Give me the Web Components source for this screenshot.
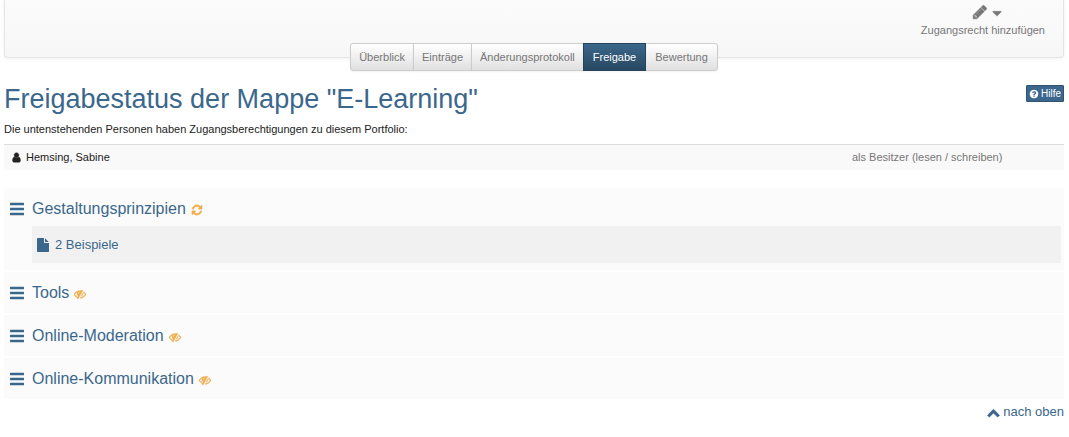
<!DOCTYPE html>
<html lang="de">
<head>
<meta charset="utf-8">
<title>Freigabe – E-Learning</title>
<style>
body { margin: 0; padding: 0 5px 16px 4px; background: #fff; color: #222; font: 11px/16px "Liberation Sans", Arial, sans-serif; }
</style>
</head>
<body>
<portfolio-page></portfolio-page>
<script>
const ICONS = {
  pencil: 'M491 1536l91-91-235-235-91 91v107h128v128h107zM1014 608q0-22-22-22-10 0-17 7l-542 542q-7 7-7 17 0 22 22 22 10 0 17-7l542-542q7-7 7-17zM960 416l416 416-832 832h-416v-416zM1643 512q0 53-37 90l-166 166-416-416 166-165q36-38 90-38 53 0 91 38l235 234q37 39 37 91z',
  caret: 'M320 640h1152q26 0 45 19t19 45-19 45l-576 576q-19 19-45 19t-45-19l-576-576q-19-19-19-45t19-45 45-19z',
  help: 'M1024 1376v-192q0-14-9-23t-23-9h-192q-14 0-23 9t-9 23v192q0 14 9 23t23 9h192q14 0 23-9t9-23zM1280 704q0-88-55.500-163t-138.500-116-170-41q-243 0-371 213-15 24 8 42l132 100q7 6 19 6 16 0 25-12 53-68 86-92 34-24 86-24 48 0 85.500 26t37.500 59q0 38-20 61t-68 45q-63 28-115.500 86.500t-52.500 125.500v36q0 14 9 23t23 9h192q14 0 23-9t9-23q0-19 21.500-49.500t54.500-49.500q32-18 49-28.500t46-35 44.500-48 28-60.500 12.500-81zM1664 896q0 209-103 385.500t-279.500 279.500-385.500 103-385.500-103-279.500-279.500-103-385.500 103-385.500 279.500-279.500 385.500-103 385.500 103 279.500 279.500 103 385.500z',
  user: 'M1536 1399q0 109-62.500 187t-150.500 78h-854q-88 0-150.500-78t-62.500-187q0-85 8.500-160.500t31.500-152 58.500-131 94-89 134.500-34.500q131 128 313 128t313-128q76 0 134.500 34.500t94 89 58.500 131 31.500 152 8.500 160.500zM1280 512q0 159-112.500 271.500t-271.500 112.500-271.500-112.500-112.500-271.500 112.500-271.500 271.500-112.500 271.500 112.500 112.500 271.500z',
  bars: 'M64 100h1664q64 0 64 64v192q0 64-64 64H64q-64 0-64-64V164q0-64 64-64zM64 736h1664q64 0 64 64v192q0 64-64 64H64q-64 0-64-64V800q0-64 64-64zM64 1372h1664q64 0 64 64v192q0 64-64 64H64q-64 0-64-64v-192q0-64 64-64z',
  refresh: 'M1639 1056q0 5-1 7-64 268-268 434.500t-478 166.500q-146 0-282.500-55t-243.500-157l-129 129q-19 19-45 19t-45-19-19-45v-448q0-26 19-45t45-19h448q26 0 45 19t19 45-19 45l-137 137q71 66 161 102t187 36q134 0 250-65t186-179q11-17 53-117 8-23 30-23h192q13 0 22.500 9.500t9.500 22.500zM1664 256v448q0 26-19 45t-45 19h-448q-26 0-45-19t-19-45 19-45l138-138q-148-137-349-137-134 0-250 65t-186 179q-11 17-53 117-8 23-30 23h-199q-13 0-22.500-9.500t-9.500-22.500v-7q65-268 270-434.500t480-166.500q146 0 284 55.500t245 156.500l130-129q19-19 45-19t45 19 19 45z',
  hidden: 'M555 1335l78-141q-87-63-136-159t-49-203q0-121 61-225-229 117-381 353 167 258 427 375zm389-759q0-20-14-34t-34-14q-125 0-214.500 89.500t-89.500 214.500q0 20 14 34t34 14 34-14 14-34q0-86 61-147t147-61q20 0 34-14t14-34zm363-191q0 7-1 9-105 188-315 566t-316 567l-49 89q-10 16-28 16-12 0-134-70-16-10-16-28 0-12 44-87-143-65-263.500-173t-208.500-245q-20-31-20-69t20-69q153-235 380-371t496-136q89 0 180 17l54-97q10-16 28-16 5 0 18 6t31 15.500 33 18.500 31.500 18.500 19.500 11.500q16 10 16 27zm37 447q0 139-79 253.500t-209 164.500l280-502q8 45 8 84zm448 128q0 35-20 69-39 64-109 145-150 172-347.500 267t-419.500 95l74-132q212-18 392.500-137t301.500-307q-115-179-282-294l63-112q95 64 182.500 153t144.500 184q20 34 20 69z',
  file: 'M1152 512v-472q22 14 36 28l408 408q14 14 28 36h-472zm-128 32q0 40 28 68t68 28h544v1056q0 40-28 68t-68 28h-1344q-40 0-68-28t-28-68v-1600q0-40 28-68t68-28h800v544z',
  up: 'M1683 1331l-166 165q-19 19-45 19t-45-19l-531-531-531 531q-19 19-45 19t-45-19l-166-165q-19-19-19-45.500t19-45.500l742-741q19-19 45-19t45 19l742 741q19 19 19 45.500t-19 45.500z'
};

function define(name, html, setup) {
  const template = document.createElement('template');
  template.innerHTML = html;
  customElements.define(name, class extends HTMLElement {
    connectedCallback() {
      if (this.shadowRoot) return;
      this.attachShadow({ mode: 'open' }).append(template.content.cloneNode(true));
      if (setup) setup(this, this.shadowRoot);
    }
  });
}

define('fa-icon', `
<style>
:host { display: inline-block; flex: none; width: var(--size, 12px); height: var(--size, 12px); }
svg { display: block; width: 100%; height: 100%; fill: currentColor; stroke: currentColor; stroke-width: var(--weight, 0); }
</style>
<svg viewBox="0 0 1792 1792" aria-hidden="true"><path/></svg>`,
(host, root) => root.querySelector('path').setAttribute('d', ICONS[host.getAttribute('name')]));

define('tool-bar', `
<style>
:host { display: flex; justify-content: flex-end; box-sizing: border-box; min-height: 58px; padding: 4px 14px 0; border: 1px solid #e5e5e5; border-top: 0; border-radius: 0 0 4px 4px; background: linear-gradient(#fbfbfb, #f7f7f7); box-shadow: 0 1px 4px #0000000d; }
</style>
<slot></slot>`);

define('tool-button', `
<style>
:host { display: block; }
button { display: flex; flex-direction: column; align-items: center; gap: 2px; margin: 0; padding: 0 4px; border: 0; background: none; color: #777; font: inherit; cursor: pointer; }
.icons { display: flex; align-items: center; gap: 3px; height: 16px; padding-left: 10px; }
.icons fa-icon { --size: 16px; --weight: 60; }
.icons .caret { --size: 12px; margin-top: 2px; }
</style>
<button type="button"><span class="icons"><fa-icon name="pencil"></fa-icon><fa-icon class="caret" name="caret"></fa-icon></span><span><slot></slot></span></button>`);

define('segment-tabs', `
<style>
:host { display: flex; justify-content: center; position: relative; margin-top: -15px; }
nav { display: flex; }
::slotted(segment-tab:not(:first-child)) { margin-left: -1px; }
::slotted(segment-tab:first-child) { --radius: 3px 0 0 3px; }
::slotted(segment-tab:last-child) { --radius: 0 3px 3px 0; --side: 9px; }
</style>
<nav aria-label="Mappe"><slot></slot></nav>`);

define('segment-tab', `
<style>
:host { display: block; }
a { display: block; padding: 5px var(--side, 8px); border: 1px solid #ccc; border-radius: var(--radius, 0); background: linear-gradient(#fff, #e0e0e0); color: #777; text-decoration: none; box-shadow: 0 1px 2px #0000000d; }
:host([active]) { position: relative; --side: 9px; }
:host([active]) a { border-color: #24445e; background: linear-gradient(#3b678c, #28475f); color: #fff; }
</style>
<a href="#"><slot></slot></a>`,
(host, root) => { if (host.hasAttribute('active')) root.querySelector('a').setAttribute('aria-current', 'page'); });

define('page-heading', `
<style>
:host { display: flex; justify-content: space-between; align-items: flex-start; margin-top: 14px; }
h1 { margin: 0; color: #3b678c; font-size: 27px; line-height: 28px; font-weight: 400; }
</style>
<h1><slot></slot></h1><slot name="action"></slot>`);

define('help-button', `
<style>
:host { display: block; }
button { display: flex; align-items: center; gap: 2px; margin: 0; padding: 0 2px; border: 1px solid #2f5370; border-radius: 1px; background: #3b678c; color: #fff; font: inherit; font-size: 10px; line-height: 15px; cursor: pointer; }
fa-icon { --size: 10px; }
</style>
<button type="button"><fa-icon name="help"></fa-icon><slot></slot></button>`);

define('access-table', `
<style>
:host { display: block; margin-top: 7px; }
table { width: 100%; border-collapse: collapse; table-layout: fixed; }
td { padding: 4px 7px 5px; border-top: 1px solid #ddd; background: #f9f9f9; text-align: left; }
.role { width: 20%; padding-left: 1px; padding-right: 0; color: #777; }
.name { display: flex; align-items: center; gap: 4px; }
fa-icon { --size: 11px; --weight: 80; }
</style>
<table aria-label="Zugangsberechtigungen"><tbody><tr>
<td><span class="name"><fa-icon name="user"></fa-icon><slot name="name"></slot></span></td>
<td class="role"><slot name="role"></slot></td>
</tr></tbody></table>`);

define('portfolio-section', `
<style>
:host { display: block; padding: 10px 3px 10px 6px; background: #fbfbfb; color: #3b678c; }
.title { display: flex; align-items: center; gap: 4px; }
h2 { margin: 0 0 0 4px; font-size: 16px; line-height: 21px; font-weight: 400; }
a { color: inherit; text-decoration: none; }
.bars { --size: 14px; }
.status { --size: 12px; --weight: 60; color: #f0ad4e; margin: 2px 0 0 1px; }
.body { margin-left: 22px; }
</style>
<div class="title"><fa-icon class="bars" name="bars"></fa-icon><h2><a href="#"><slot name="title"></slot></a></h2></div>
<div class="body"><slot></slot></div>`,
(host, root) => {
  const icon = document.createElement('fa-icon');
  icon.className = 'status';
  icon.setAttribute('name', host.getAttribute('status'));
  root.querySelector('.title').append(icon);
});

define('portfolio-item', `
<style>
:host { display: block; margin: 7px 0 -3px; padding: 8px 4px; background: #f1f1f1; }
a { display: flex; align-items: center; gap: 5px; color: #3b678c; font-size: 13px; line-height: 21px; text-decoration: none; }
fa-icon { --size: 14px; }
</style>
<a href="#"><fa-icon name="file"></fa-icon><slot></slot></a>`);

define('top-link', `
<style>
:host { display: flex; justify-content: flex-end; margin-top: 4px; }
a { display: flex; align-items: center; gap: 3px; color: #3b678c; font-size: 13px; line-height: 18px; text-decoration: none; }
fa-icon { --size: 13px; --weight: 90; }
</style>
<a href="#"><fa-icon name="up"></fa-icon><slot></slot></a>`);

define('portfolio-page', `
<style>
:host { display: block; }
p { margin: 8px 0 0; }
.sections { display: flex; flex-direction: column; gap: 2px; margin-top: 18px; }
</style>
<tool-bar><tool-button>Zugangsrecht hinzufügen</tool-button></tool-bar>
<segment-tabs>
<segment-tab>Überblick</segment-tab><segment-tab>Einträge</segment-tab><segment-tab>Änderungsprotokoll</segment-tab><segment-tab active>Freigabe</segment-tab><segment-tab>Bewertung</segment-tab>
</segment-tabs>
<main>
<page-heading>Freigabestatus der Mappe "E-Learning"<help-button slot="action">Hilfe</help-button></page-heading>
<p>Die untenstehenden Personen haben Zugangsberechtigungen zu diesem Portfolio:</p>
<access-table><span slot="name">Hemsing, Sabine</span><span slot="role">als Besitzer (lesen / schreiben)</span></access-table>
<div class="sections">
<portfolio-section status="refresh"><span slot="title">Gestaltungsprinzipien</span><portfolio-item>2 Beispiele</portfolio-item></portfolio-section>
<portfolio-section status="hidden"><span slot="title">Tools</span></portfolio-section>
<portfolio-section status="hidden"><span slot="title">Online-Moderation</span></portfolio-section>
<portfolio-section status="hidden"><span slot="title">Online-Kommunikation</span></portfolio-section>
</div>
<top-link>nach oben</top-link>
</main>`);
</script>
</body>
</html>
